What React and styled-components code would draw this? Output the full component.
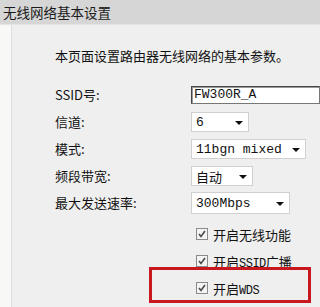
import React from "react";
import styled, { createGlobalStyle } from "styled-components";

const Global = createGlobalStyle`
  html, body { margin: 0; padding: 0; background: #efefef; }
  body { width: 320px; height: 307px; overflow: hidden; font-family: "Noto Sans CJK SC", "Liberation Sans", sans-serif; color: #111; }
`;

const Page = styled.div`
  position: relative;
  width: 320px;
  height: 307px;
  display: flex;
  flex-direction: column;
  overflow: hidden;
`;

const TitleBar = styled.div`
  height: 25px;
  background: #d6d6d6;
  display: flex;
  align-items: center;
  padding-left: 3px;
  font-size: 13.5px;
  color: #1a1a1a;
  border-bottom: 1px solid #e4e4e4;
  box-sizing: border-box;
`;

const Body = styled.div`
  flex: 1;
  display: flex;
`;

const LeftStrip = styled.div`
  width: 11px;
  background: #f8f8f6;
  border-right: 1px solid #dedede;
`;

const Panel = styled.div`
  flex: 1;
  background: #efefef;
  padding: 23px 0 0 43px;
`;

const Desc = styled.div`
  font-size: 13px;
  line-height: 16px;
  white-space: nowrap;
`;

const Form = styled.div`
  margin-top: 21px;
  display: grid;
  grid-template-columns: 136px 1fr;
  grid-auto-rows: 20px;
  row-gap: 7px;
  align-items: center;
`;

const Label = styled.div`
  font-size: 13px;
  line-height: 20px;
  white-space: nowrap;
`;

const Field = styled.div`
  display: flex;
  align-items: center;
  min-width: 0;
`;

const TextInput = styled.div`
  box-sizing: border-box;
  width: 160px;
  height: 18px;
  background: #fff;
  border: 1px solid #777;
  border-top-color: #444;
  border-left-color: #444;
  box-shadow: inset 1px 1px 0 #999;
  font-family: "Liberation Mono", monospace;
  font-size: 13px;
  line-height: 16px;
  padding-left: 2px;
  white-space: nowrap;
`;

const Select = styled.div`
  box-sizing: border-box;
  width: ${(p) => p.$w}px;
  height: ${(p) => p.$h || 20}px;
  background: #fff;
  border: 1px solid #d0d0d0;
  display: flex;
  align-items: center;
  justify-content: space-between;
  padding: 0 5px 0 4px;
  font-family: ${(p) => (p.$cjk ? '"Noto Sans CJK SC", sans-serif' : '"Liberation Mono", monospace')};
  font-size: 13px;
  white-space: nowrap;
`;

const Arrow = styled.span`
  width: 0;
  height: 0;
  border-left: 4px solid transparent;
  border-right: 4px solid transparent;
  border-top: 4px solid #111;
  margin-top: 2px;
`;

const Checks = styled.div`
  margin-top: 11px;
  padding-left: 141px;
  display: flex;
  flex-direction: column;
  gap: 7px;
`;

const CheckRow = styled.div`
  height: 20px;
  display: flex;
  align-items: center;
  gap: 5px;
  font-size: 13px;
  white-space: nowrap;
`;

const Box = styled.span`
  box-sizing: border-box;
  width: 12px;
  height: 12px;
  border: 1px solid #8a8a8a;
  background: #f4f4f4;
  display: flex;
  align-items: center;
  justify-content: center;
`;

const Mono = styled.span`
  font-family: "Liberation Mono", monospace;
  font-size: 12px;
  letter-spacing: -0.5px;
`;

const Highlight = styled.div`
  position: absolute;
  left: 149px;
  top: 267px;
  width: 162px;
  height: 36px;
  box-sizing: border-box;
  border: 3px solid #c8171e;
  pointer-events: none;
`;

const Check = () => (
  <Box>
    <svg width="10" height="10" viewBox="0 0 10 10">
      <path d="M2 5 L4 7.5 L8 2" stroke="#4a4a4a" strokeWidth="1.6" fill="none" />
    </svg>
  </Box>
);

const Sel = ({ w, h, cjk, children }) => (
  <Select $w={w} $h={h} $cjk={cjk}>
    <span>{children}</span>
    <Arrow />
  </Select>
);

export default function App() {
  return (
    <Page>
      <Global />
      <TitleBar>无线网络基本设置</TitleBar>
      <Body>
        <LeftStrip />
        <Panel>
          <Desc>本页面设置路由器无线网络的基本参数。</Desc>
          <Form>
            <Label>SSID号:</Label>
            <Field>
              <TextInput>FW300R_A</TextInput>
            </Field>
            <Label>信道:</Label>
            <Field>
              <Sel w={58}>6</Sel>
            </Field>
            <Label>模式:</Label>
            <Field>
              <Sel w={115}>11bgn mixed</Sel>
            </Field>
            <Label>频段带宽:</Label>
            <Field>
              <Sel w={62} cjk>自动</Sel>
            </Field>
            <Label>最大发送速率:</Label>
            <Field>
              <Sel w={99} h={22}>300Mbps</Sel>
            </Field>
          </Form>
          <Checks>
            <CheckRow>
              <Check />
              开启无线功能
            </CheckRow>
            <CheckRow>
              <Check />
              <span>
                开启<Mono>SSID</Mono>广播
              </span>
            </CheckRow>
            <CheckRow>
              <Check />
              <span>
                开启<Mono>WDS</Mono>
              </span>
            </CheckRow>
          </Checks>
        </Panel>
      </Body>
      <Highlight />
    </Page>
  );
}
